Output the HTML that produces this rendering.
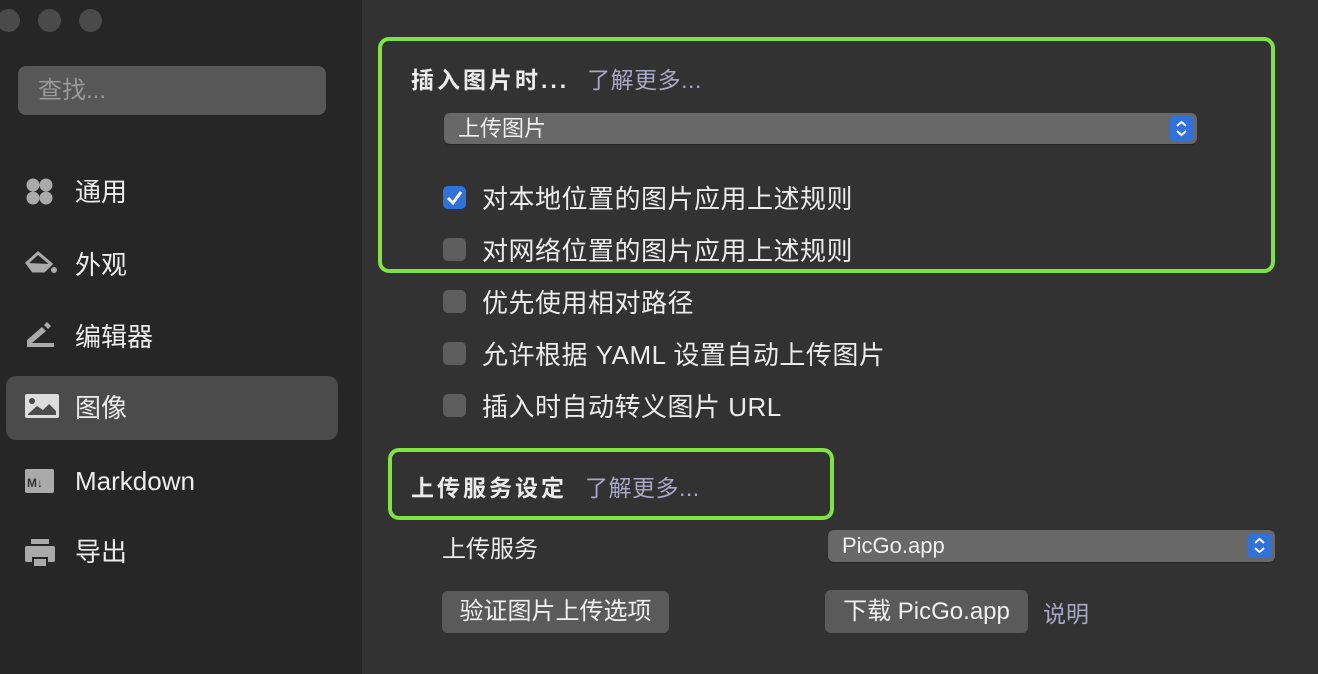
<!DOCTYPE html>
<html><head><meta charset="utf-8"><style>
*{margin:0;padding:0;box-sizing:border-box}
body{width:1318px;height:674px;overflow:hidden;background:#323232;font-family:"Liberation Sans","Noto Sans CJK SC",sans-serif;color:#e6e6e6;position:relative}
.sb{position:absolute;left:0;top:0;width:362px;height:674px;background:#262626}
.dot{position:absolute;top:9px;width:23px;height:23px;border-radius:50%;background:#4a4a4a}
.search{position:absolute;left:18px;top:66px;width:308px;height:49px;border-radius:8px;background:#575757;color:#9a9a9a;font-size:24px;line-height:49px;padding-left:20px}
.item{position:absolute;left:6px;width:332px;height:64px;border-radius:10px;font-size:26px;line-height:64px;padding-left:69px;color:#ececec}
.item.sel{background:#4b4b4b}
.item svg{position:absolute;left:18px;top:16px}
.abs{position:absolute;white-space:nowrap}
.g{position:absolute;border:4px solid #7ee23f;border-radius:11px}
.h{font-size:23px;font-weight:bold;color:#ececec;letter-spacing:3px}
.lm{font-size:23px;color:#a9a7c4;font-weight:normal;margin-left:18px;letter-spacing:0.5px}
.dd{position:absolute;background:#686868;border-radius:6px;font-size:22px;color:#f0f0f0;padding-left:14px;box-shadow:0 1px 1px rgba(0,0,0,.3)}
.step{position:absolute;right:3px;top:3px;width:25px;height:25px;border-radius:5px;background:#2f72dc}
.cb{position:absolute;left:443px;width:23px;height:23px;border-radius:5px;background:#5d5d5d}
.cbt{position:absolute;left:482px;font-size:26px;letter-spacing:0.5px;color:#ececec;white-space:nowrap}
.btn{position:absolute;background:#5a5a5a;border-radius:6px;font-size:24px;color:#f0f0f0;text-align:center}
</style></head><body>
<div class="sb">
<div class="dot" style="left:-3px"></div><div class="dot" style="left:38px"></div><div class="dot" style="left:79px"></div>
<div class="search">查找...</div>
<div class="item" style="top:160px"><svg width="32" height="32"><circle cx="9" cy="9" r="6.5" fill="#aaa"/><circle cx="22" cy="9" r="6.5" fill="#aaa"/><circle cx="9" cy="22" r="6.5" fill="#aaa"/><circle cx="22" cy="22" r="6.5" fill="#aaa"/></svg>通用</div>
<div class="item" style="top:233px"><svg width="34" height="32"><path d="M3 14 L14 4 L27 15 L20 22 L9 22 Z" fill="none" stroke="#aaa" stroke-width="3"/><path d="M3 14 L27 15 L20 22 L9 22Z" fill="#aaa"/><circle cx="30" cy="21" r="3" fill="#aaa"/></svg>外观</div>
<div class="item" style="top:305px"><svg width="32" height="32"><path d="M3 25 L3 19 L18 6 L22 10 L8 22 L30 22 L30 26 L3 26Z" fill="#aaa"/><path d="M20 4 L23 1 L27 5 L24 8Z" fill="#aaa"/></svg>编辑器</div>
<div class="item sel" style="top:376px"><svg width="36" height="30"><rect x="1" y="2" width="34" height="24" rx="2" fill="#ddd"/><circle cx="8" cy="9" r="3" fill="#4b4b4b"/><path d="M4 22 L13 14 L19 18 L25 12 L32 19 L32 23 L4 23Z" fill="#4b4b4b"/></svg>图像</div>
<div class="item" style="top:449px"><svg width="32" height="32"><rect x="1" y="4" width="29" height="24" rx="2" fill="#aaa"/><text x="3" y="22" font-size="12" font-weight="bold" fill="#333" font-family="Liberation Sans">M↓</text></svg>Markdown</div>
<div class="item" style="top:520px"><svg width="32" height="32"><rect x="7" y="3" width="18" height="5" fill="#aaa"/><rect x="1" y="10" width="30" height="16" rx="2" fill="#aaa"/><rect x="8" y="21" width="16" height="8" fill="#262626"/><rect x="10" y="23" width="12" height="7" fill="#aaa"/></svg>导出</div>
</div>

<div class="g" style="left:378px;top:37px;width:897px;height:236px"></div>
<div class="abs h" style="left:411px;top:61px">插入图片时...<span class="lm">了解更多...</span></div>
<div class="dd" style="left:444px;top:113px;width:753px;height:31px;line-height:31px">上传图片<div class="step"><svg width="25" height="25"><path d="M8 10 L12.5 6 L17 10 M8 15 L12.5 19 L17 15" fill="none" stroke="#fff" stroke-width="2"/></svg></div></div>

<div class="cb" style="top:186px;background:#2f72dc"><svg width="23" height="23"><path d="M5 12 L10 17 L18 6" fill="none" stroke="#fff" stroke-width="3"/></svg></div>
<div class="cbt" style="top:179px">对本地位置的图片应用上述规则</div>
<div class="cb" style="top:238px"></div><div class="cbt" style="top:231px">对网络位置的图片应用上述规则</div>
<div class="cb" style="top:290px"></div><div class="cbt" style="top:283px">优先使用相对路径</div>
<div class="cb" style="top:342px"></div><div class="cbt" style="top:335px">允许根据 YAML 设置自动上传图片</div>
<div class="cb" style="top:394px"></div><div class="cbt" style="top:387px">插入时自动转义图片 URL</div>

<div class="g" style="left:388px;top:448px;width:446px;height:72px"></div>
<div class="abs h" style="left:411px;top:469px">上传服务设定<span class="lm">了解更多...</span></div>

<div class="abs" style="left:442px;top:529px;font-size:24px;color:#ececec">上传服务</div>
<div class="dd" style="left:828px;top:530px;width:447px;height:32px;line-height:32px">PicGo.app<div class="step"><svg width="25" height="25"><path d="M8 10 L12.5 6 L17 10 M8 15 L12.5 19 L17 15" fill="none" stroke="#fff" stroke-width="2"/></svg></div></div>

<div class="btn" style="left:442px;top:591px;width:227px;height:42px;line-height:42px">验证图片上传选项</div>
<div class="btn" style="left:825px;top:590px;width:203px;height:43px;line-height:43px">下载 PicGo.app</div>
<div class="abs" style="left:1043px;top:595px;font-size:23px;color:#a9a7c4">说明</div>
</body></html>
